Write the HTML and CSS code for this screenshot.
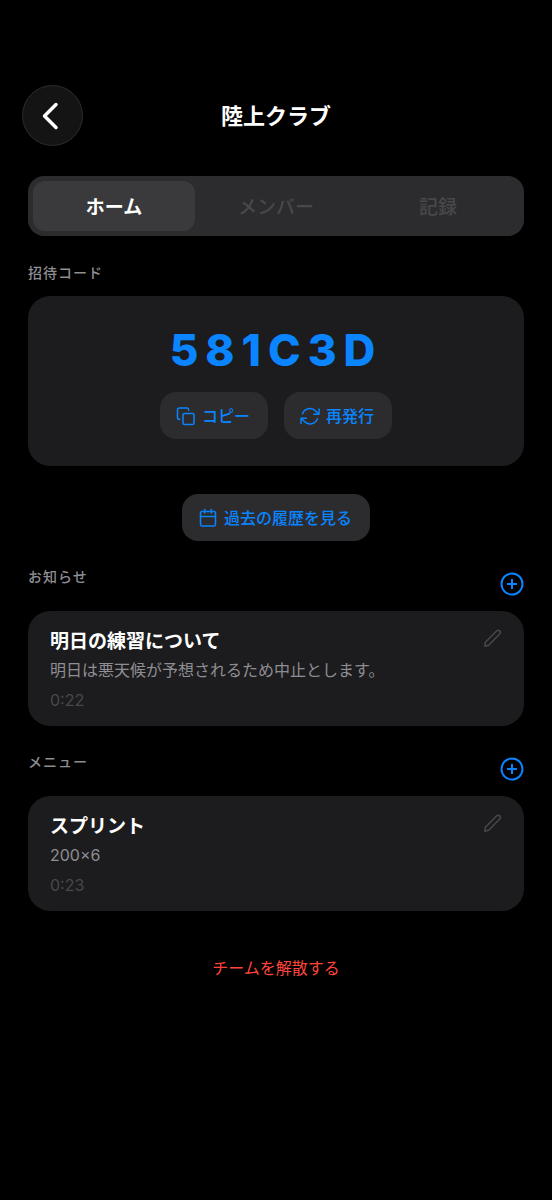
FILE: index.html
```html
<!DOCTYPE html>
<html lang="ja">
<head>
<meta charset="utf-8">
<meta name="viewport" content="width=device-width, initial-scale=1">
<title>陸上クラブ</title>
<link rel="stylesheet" href="styles.css">
</head>
<body>
<header class="topbar">
  <button class="back" type="button" aria-label="戻る">
    <svg width="59" height="59" viewBox="0 0 59 59"><path d="M33 18.500L21.500 30L33 41.500"/></svg>
  </button>
  <h1 class="title">陸上クラブ</h1>
</header>
<main class="content">
  <nav class="tabs">
    <button class="tab tab-active" type="button">ホーム</button>
    <button class="tab" type="button">メンバー</button>
    <button class="tab" type="button">記録</button>
  </nav>

  <section class="section">
    <div class="section-head section-head-plain"><h2 class="label">招待コード</h2></div>
    <div class="card invite">
      <p class="code">581C3D</p>
      <div class="actions">
        <button class="pill" type="button">
          <svg class="icon" width="20" height="20" viewBox="0 0 20 20"><rect x="7" y="7.500" width="11" height="11" rx="1.600"/><path d="M3.800 13.300H3.300A1.800 1.800 0 0 1 1.500 11.500V3.800A1.800 1.800 0 0 1 3.300 2H10.800A1.800 1.800 0 0 1 12.600 3.800V4.300"/></svg>
          コピー
        </button>
        <button class="pill" type="button">
          <svg class="icon" width="20" height="20" viewBox="0 0 20 20"><path d="M19 3V8.300H13.700"/><path d="M1 17.500V12.200H6.300"/><path d="M18.600 8L15.600 4.900A8 8 0 0 0 2.500 7.700"/><path d="M1.400 12.500L4.400 15.600A8 8 0 0 0 17.500 12.800"/></svg>
          再発行
        </button>
      </div>
    </div>
    <button class="pill history" type="button">
      <svg class="icon" width="20" height="20" viewBox="0 0 20 20"><rect x="2.500" y="3.500" width="15" height="14.500" rx="1.600"/><path d="M2.500 8.500H17.500M6.700 1.500V5M13.300 1.500V5"/></svg>
      過去の履歴を見る
    </button>
  </section>

  <section class="section">
    <div class="section-head">
      <h2 class="label">お知らせ</h2>
      <button class="add" type="button" aria-label="お知らせを追加">
        <svg width="24" height="24" viewBox="0 0 24 24"><circle cx="12" cy="12" r="10.500"/><path d="M12 7.800V16.200M7.800 12H16.200"/></svg>
      </button>
    </div>
    <article class="card item">
      <div class="item-text">
        <h3 class="item-title">明日の練習について</h3>
        <p class="item-body">明日は悪天候が予想されるため中止とします。</p>
        <time class="item-time">0:22</time>
      </div>
      <button class="edit" type="button" aria-label="編集">
        <svg width="20" height="20" viewBox="0 0 20 20"><path d="M2.900 18.200L3.400 14.200L14.500 3A2.150 2.150 0 0 1 17.700 6L6.700 17.200Z"/></svg>
      </button>
    </article>
  </section>

  <section class="section">
    <div class="section-head">
      <h2 class="label">メニュー</h2>
      <button class="add" type="button" aria-label="メニューを追加">
        <svg width="24" height="24" viewBox="0 0 24 24"><circle cx="12" cy="12" r="10.500"/><path d="M12 7.800V16.200M7.800 12H16.200"/></svg>
      </button>
    </div>
    <article class="card item">
      <div class="item-text">
        <h3 class="item-title">スプリント</h3>
        <p class="item-body">200×6</p>
        <time class="item-time">0:23</time>
      </div>
      <button class="edit" type="button" aria-label="編集">
        <svg width="20" height="20" viewBox="0 0 20 20"><path d="M2.900 18.200L3.400 14.200L14.500 3A2.150 2.150 0 0 1 17.700 6L6.700 17.200Z"/></svg>
      </button>
    </article>
  </section>

  <button class="disband" type="button">チームを解散する</button>
</main>
</body>
</html>
```
FILE: styles.css
```css
* {
  box-sizing: border-box;
  margin: 0;
  padding: 0;
}

body {
  min-height: 100vh;
  background: #000;
  color: #fff;
  font-family: Inter, "Noto Sans CJK JP", sans-serif;
}

button {
  border: 0;
  background: none;
  color: inherit;
  font: inherit;
  cursor: pointer;
}

svg {
  display: block;
  flex: none;
  fill: none;
  stroke: currentColor;
  stroke-linecap: round;
  stroke-linejoin: round;
}

.topbar {
  display: grid;
  grid-template-columns: 61px 1fr 61px;
  align-items: center;
  padding: 85px 22px 0;
}

.back {
  height: 61px;
  border: 1px solid #2c2c2d;
  border-radius: 50%;
  background: #141414;
}

.back svg {
  stroke-width: 3.5;
}

.title {
  text-align: center;
  font-size: 22px;
  line-height: 32px;
  font-weight: 600;
}

.content {
  display: flex;
  flex-direction: column;
  padding: 30px 28px;
}

.tabs {
  display: grid;
  grid-template-columns: repeat(3, 1fr);
  padding: 5px;
  border-radius: 16px;
  background: #2c2c2e;
}

.tab {
  height: 50px;
  padding-top: 3px;
  border-radius: 12px;
  color: #48484a;
  font-size: 19px;
  line-height: 28px;
  font-weight: 500;
}

.tab-active {
  background: #3a3a3c;
  color: #fff;
  font-weight: 600;
}

.section {
  display: flex;
  flex-direction: column;
  padding-top: 26px;
}

.section-head {
  display: flex;
  justify-content: space-between;
  min-height: 29px;
  margin-bottom: 15px;
}

.section-head-plain {
  align-items: flex-end;
  min-height: 21px;
  margin-bottom: 13px;
}

.label {
  color: #8e8e93;
  font-size: 14px;
  line-height: 20px;
  font-weight: 500;
  letter-spacing: 1px;
}

.add {
  align-self: flex-end;
  color: #0a84ff;
}

.add svg {
  stroke-width: 2;
}

.card {
  border-radius: 22px;
  background: #1c1c1e;
}

.invite {
  padding: 27px;
}

.code {
  color: #0a84ff;
  text-align: center;
  font-size: 44px;
  line-height: 54px;
  font-weight: 800;
  letter-spacing: 7px;
}

.actions {
  display: flex;
  justify-content: center;
  gap: 16px;
  margin-top: 15px;
}

.pill {
  display: flex;
  align-items: center;
  justify-content: center;
  gap: 6px;
  height: 47px;
  padding: 0 18px 0 16px;
  border-radius: 16px;
  background: #2c2c2e;
  color: #0a84ff;
  font-size: 16px;
  line-height: 24px;
  font-weight: 500;
}

.icon {
  stroke-width: 1.5;
}

.history {
  align-self: center;
  margin-top: 28px;
}

.item {
  display: flex;
  align-items: flex-start;
  justify-content: space-between;
  padding: 17px 22px 15px;
}

.item-title {
  font-size: 19px;
  line-height: 28px;
  font-weight: 600;
}

.item-body {
  margin-top: 1px;
  color: #8e8e93;
  font-size: 16px;
  line-height: 26px;
}

.item-time {
  display: block;
  margin-top: 6px;
  color: #48484a;
  font-size: 16px;
  line-height: 22px;
}

.edit {
  color: #48484a;
}

.edit svg {
  stroke-width: 1.5;
}

.disband {
  align-self: center;
  margin-top: 45px;
  color: #ff453a;
  font-size: 16px;
  line-height: 24px;
}
```
